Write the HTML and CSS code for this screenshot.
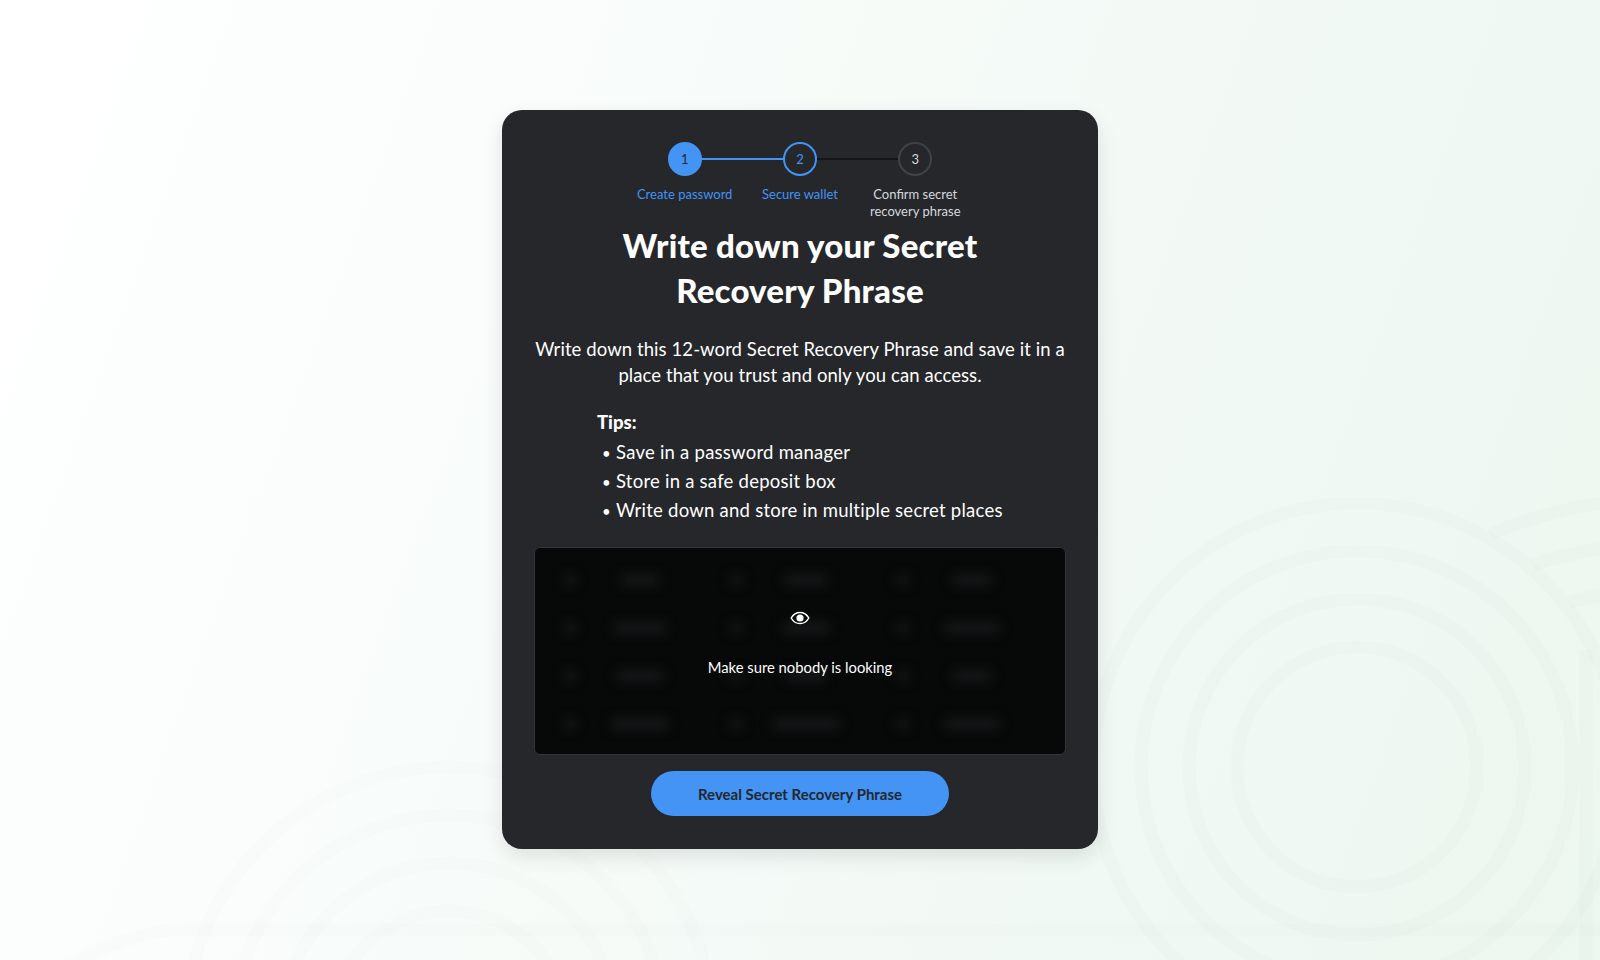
FILE: index.html
```html
<!DOCTYPE html>
<html lang="en">
<head>
<meta charset="utf-8">
<title>Write down your Secret Recovery Phrase</title>
<link rel="stylesheet" href="styles.css">
</head>
<body>
<svg class="bg-art" width="1600" height="960" viewBox="0 0 1600 960" aria-hidden="true">
  <g class="rings">
    <circle cx="1357" cy="767" r="120"/><circle cx="1357" cy="767" r="168"/><circle cx="1357" cy="767" r="216"/><circle cx="1357" cy="767" r="264"/>
    <path d="M1490 534Q1545 512 1600 503M1533 565Q1565 554 1600 549M1570 602Q1585 598 1600 596"/>
    <path d="M1586 650V960"/>
  </g>
  <g class="rings rings-faint">
    <circle cx="449" cy="1031" r="264"/><circle cx="449" cy="1031" r="216"/><circle cx="449" cy="1031" r="168"/><circle cx="449" cy="1031" r="120"/>
    <path d="M66 968Q115 938 168 930H1600"/>
  </g>
</svg>
<main class="card">
  <ol class="steps">
    <li class="step done"><span class="dot">1</span><span class="label">Create password</span></li>
    <li class="step current"><span class="dot">2</span><span class="label">Secure wallet</span></li>
    <li class="step"><span class="dot">3</span><span class="label">Confirm secret recovery phrase</span></li>
  </ol>
  <h1 class="title">Write down your Secret Recovery Phrase</h1>
  <p class="desc">Write down this 12-word Secret Recovery Phrase and save it in a place that you trust and only you can access.</p>
  <div class="tips">
    <strong class="tips-head">Tips:</strong>
    <ul class="tips-list">
      <li>Save in a password manager</li>
      <li>Store in a safe deposit box</li>
      <li>Write down and store in multiple secret places</li>
    </ul>
  </div>
  <section class="phrase">
    <div class="blur-grid" aria-hidden="true">
      <i class="n"></i><i class="w w38"></i><i class="n"></i><i class="w w42"></i><i class="n"></i><i class="w w38"></i>
      <i class="n"></i><i class="w w52"></i><i class="n"></i><i class="w w46"></i><i class="n"></i><i class="w w54"></i>
      <i class="n"></i><i class="w w46"></i><i class="n"></i><i class="w w38"></i><i class="n"></i><i class="w w40"></i>
      <i class="n"></i><i class="w w56"></i><i class="n"></i><i class="w w66"></i><i class="n"></i><i class="w w54"></i>
    </div>
    <div class="phrase-over">
      <svg class="eye" width="20" height="14" viewBox="0 0 20 14" aria-hidden="true">
        <path d="M1.2 7C3.2 3.4 6.3 1.4 10 1.4S16.8 3.4 18.8 7C16.8 10.6 13.7 12.6 10 12.6S3.2 10.6 1.2 7Z" fill="none" stroke="#fff" stroke-width="1.5"/>
        <circle cx="10" cy="7" r="3.6" fill="#fff"/>
      </svg>
      <span class="phrase-msg">Make sure nobody is looking</span>
    </div>
  </section>
  <button class="reveal" type="button">Reveal Secret Recovery Phrase</button>
</main>
</body>
</html>
```
FILE: styles.css
```css
* { box-sizing: border-box; }
html, body { margin: 0; height: 960px; overflow: hidden; }
body {
  position: relative;
  font-family: "Lato", "Liberation Sans", sans-serif;
  color: #fff;
  background: linear-gradient(110deg, #ffffff 0%, #f8fcfa 35%, #f2f9f5 65%, #ecf7ef 100%);
  padding-top: 110px;
}
.bg-art { position: absolute; left: 0; top: 0; }
.rings { fill: none; stroke: rgba(70, 90, 80, .016); stroke-width: 13; }
.rings-faint { stroke: rgba(70, 90, 80, .011); }
.card {
  position: relative;
  width: 596px;
  height: 739px;
  margin: 0 auto;
  padding: 32px;
  background: #25272b;
  border-radius: 20px;
  box-shadow: 0 8px 20px rgba(0, 0, 0, .1);
  display: flex;
  flex-direction: column;
  align-items: center;
}
.steps {
  list-style: none;
  margin: 0;
  padding: 0;
  display: flex;
  height: 81px;
  flex: none;
}
.step {
  position: relative;
  width: 115.3px;
  display: flex;
  flex-direction: column;
  align-items: center;
  color: #d6d9dc;
  font-size: 13px;
  line-height: 17px;
  text-align: center;
}
.step + .step::before {
  content: "";
  position: absolute;
  left: -50%;
  width: 100%;
  top: 16px;
  height: 2px;
  background: #141618;
}
.step.current::before { background: #4394f5; }
.dot {
  position: relative;
  z-index: 1;
  width: 34px;
  height: 34px;
  margin-bottom: 10px;
  border-radius: 50%;
  border: 2px solid #3f4246;
  background: #25272b;
  font-size: 13px;
  display: flex;
  align-items: center;
  justify-content: center;
}
.done .dot { background: #4394f5; border-color: #4394f5; color: #25272b; }
.current .dot { border-color: #4394f5; color: #4394f5; }
.done .label, .current .label { color: #4394f5; }
.step .label { width: 115px; }
.title {
  margin: 0;
  width: 420px;
  flex: none;
  font-size: 33px;
  line-height: 45px;
  font-weight: 900;
  letter-spacing: .2px;
  text-align: center;
}
.desc {
  margin: 24px 0 0;
  font-size: 18.5px;
  line-height: 25.5px;
  letter-spacing: .08px;
  text-align: center;
  flex: none;
}
.tips {
  align-self: flex-start;
  margin: 20px 0 0 63px;
  font-size: 18.5px;
  line-height: 29px;
  letter-spacing: .24px;
}
.tips-head { display: block; font-weight: 900; letter-spacing: 0; margin-bottom: 1px; }
.tips-list { margin: 0; padding: 0 0 0 19px; list-style: none; }
.tips-list li { height: 29px; }
.tips-list li::before {
  content: "•";
  display: inline-block;
  width: 14px;
  margin-left: -14px;
  font-size: 15px;
  line-height: 1;
}
.phrase {
  position: relative;
  flex: none;
  width: 532px;
  height: 208px;
  margin-top: 22px;
  background: #070808;
  border: 1px solid #333639;
  border-radius: 6px;
  overflow: hidden;
}
.blur-grid {
  display: grid;
  grid-template-columns: repeat(3, 48px 118px);
  grid-template-rows: repeat(4, 48px);
  padding: 8px 0 0 11px;
  align-items: center;
  justify-items: center;
  filter: blur(6px);
}
.n, .w { display: block; height: 10px; background: #191a1b; }
.n { width: 11px; }
.w { margin-right: 26px; }
.w38 { width: 38px; } .w40 { width: 40px; } .w42 { width: 42px; } .w46 { width: 46px; }
.w52 { width: 52px; } .w54 { width: 54px; } .w56 { width: 56px; } .w66 { width: 66px; }
.phrase-over {
  position: absolute;
  inset: 0;
  display: flex;
  flex-direction: column;
  align-items: center;
  padding-top: 63px;
}
.eye { display: block; }
.phrase-msg { margin-top: 31.5px; font-size: 14.8px; line-height: 20px; }
.reveal {
  flex: none;
  width: 298px;
  height: 45px;
  margin-top: 16px;
  border: 0;
  border-radius: 23px;
  background: #4394f5;
  color: #25272b;
  font-family: inherit;
  font-size: 15px;
  font-weight: 700;
}
```
